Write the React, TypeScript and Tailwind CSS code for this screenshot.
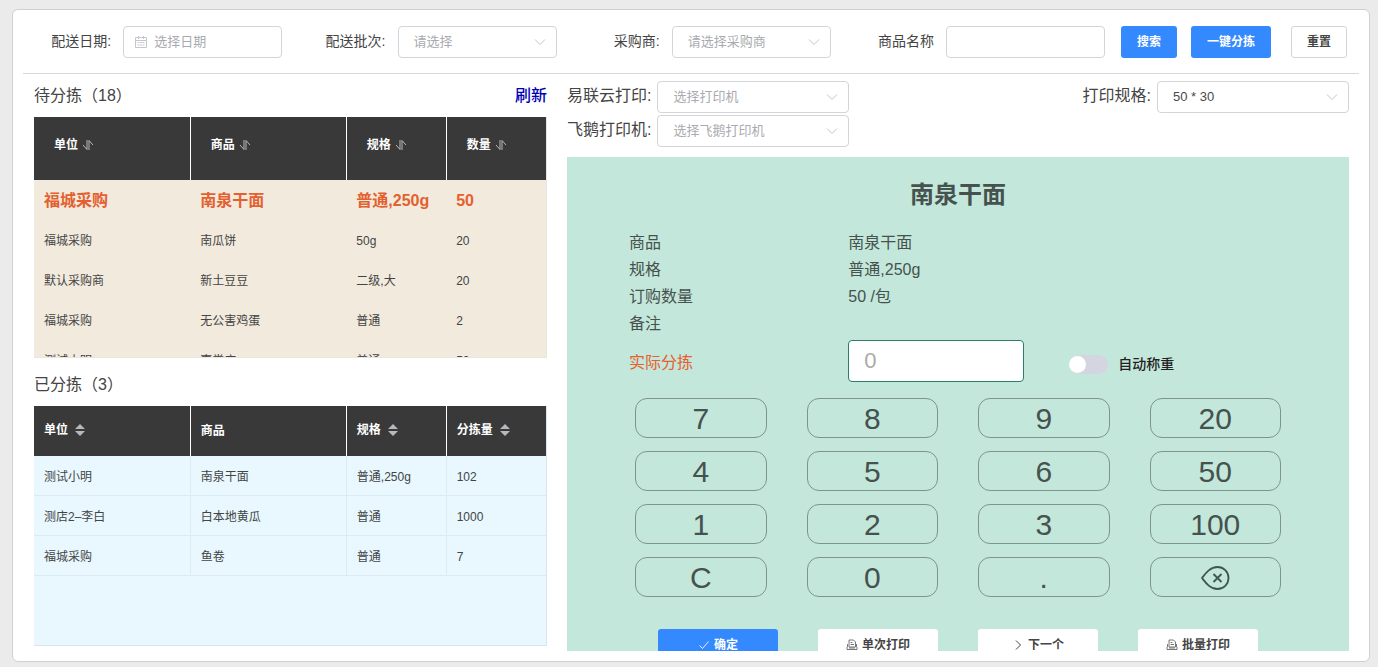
import type { ReactNode } from 'react';

interface SortingRow {
  unit: string;
  product: string;
  spec: string;
  amount: string;
}

const pendingRows: SortingRow[] = [
  { unit: '福城采购', product: '南泉干面', spec: '普通,250g', amount: '50' },
  { unit: '福城采购', product: '南瓜饼', spec: '50g', amount: '20' },
  { unit: '默认采购商', product: '新土豆豆', spec: '二级,大', amount: '20' },
  { unit: '福城采购', product: '无公害鸡蛋', spec: '普通', amount: '2' },
  { unit: '测试小明', product: '嘉尝店', spec: '普通', amount: '50' },
];

const sortedRows: SortingRow[] = [
  { unit: '测试小明', product: '南泉干面', spec: '普通,250g', amount: '102' },
  { unit: '测店2–李白', product: '白本地黄瓜', spec: '普通', amount: '1000' },
  { unit: '福城采购', product: '鱼卷', spec: '普通', amount: '7' },
];

const details = [
  { label: '商品', value: '南泉干面' },
  { label: '规格', value: '普通,250g' },
  { label: '订购数量', value: '50 /包' },
  { label: '备注', value: '' },
];

const keys = ['7', '8', '9', '20', '4', '5', '6', '50', '1', '2', '3', '100', 'C', '0', '.'];

function CalendarIcon() {
  return (
    <svg className="size-3 shrink-0" viewBox="0 0 12 12" fill="none" stroke="#c4c7cd">
      <path d="M.5 1.5h11v10H.5zM.5 4.5h11M3.5 0v3M8.5 0v3M2.5 6.5h2M5 6.5h2M7.5 6.5h2M2.5 9h2M5 9h2M7.5 9h2" />
    </svg>
  );
}

function ChevronIcon() {
  return (
    <svg className="pointer-events-none absolute top-1/2 right-[11px] h-3 w-3 -translate-y-1/2" viewBox="0 0 12 12" fill="none" stroke="#c0c4cc">
      <path d="M1 3.5 6 8.5 11 3.5" />
    </svg>
  );
}

function SwapIcon() {
  return (
    <svg className="size-3" viewBox="0 0 12 12" fill="none" stroke="#d8d8d8" strokeWidth="0.8">
      <path d="M1 6 5 10.5V1M7 11V1.500L11 6" />
    </svg>
  );
}

function CaretSortIcon() {
  return (
    <svg className="h-3 w-2.5" viewBox="0 0 10 12" fill="#b5b8bd">
      <path d="M0 5 5 0l5 5zM0 7l5 5 5-5z" />
    </svg>
  );
}

function PrinterIcon() {
  return (
    <svg className="size-3" viewBox="0 0 12 12" fill="none" stroke="#555" strokeWidth="0.8">
      <path d="M3 8V1h4.500L9.500 3v5zM1.500 5v3M10.500 5v3M1 8v2.500h10V8M4.500 3.500h2M4.500 5.500h3.500M3 9h6" />
    </svg>
  );
}

function CheckIcon() {
  return (
    <svg className="size-3" viewBox="0 0 12 12" fill="none" stroke="white" strokeWidth="0.9">
      <path d="M1.500 6.500 4.500 9.500 10.500 2.500" />
    </svg>
  );
}

function NextIcon() {
  return (
    <svg className="size-3" viewBox="0 0 12 12" fill="none" stroke="#444">
      <path d="M4 1.500 8.500 6 4 10.500" />
    </svg>
  );
}

function BackspaceIcon() {
  return (
    <svg className="h-7 w-8" viewBox="0 0 32 28" fill="none" stroke="#3f554d" strokeWidth="1.800">
      <path d="M3 14C6.500 9.500 11 3 18.500 3a11 11 0 0 1 0 22C11 25 6.500 18.500 3 14Z" strokeLinejoin="round" />
      <path d="M14.500 10l8 8M22.500 10l-8 8" />
    </svg>
  );
}

interface SelectBoxProps {
  id: string;
  text: string;
  filled?: boolean;
  className: string;
}

function SelectBox({ id, text, filled, className }: SelectBoxProps) {
  return (
    <div className={`relative shrink-0 ${className}`}>
      <select
        id={id}
        className={`h-8 w-full appearance-none rounded border border-[#d4d5d8] bg-white pr-7 pl-[15px] text-[13px] ${filled ? 'text-[#4a4a4a]' : 'text-[#a9abb0]'}`}
      >
        <option>{text}</option>
      </select>
      <ChevronIcon />
    </div>
  );
}

function Field({ id, label, children }: { id: string; label: string; children: ReactNode }) {
  return (
    <div className="flex items-center justify-end gap-3">
      <label htmlFor={id} className="pb-0.5 text-sm whitespace-nowrap">{label}</label>
      {children}
    </div>
  );
}

function Columns() {
  return (
    <colgroup>
      <col className="w-[30.5%]" />
      <col className="w-[30.5%]" />
      <col className="w-[19.5%]" />
      <col className="w-[19.5%]" />
    </colgroup>
  );
}

function PendingTable() {
  return (
    <div className="min-h-0 flex-1 overflow-hidden border-r border-b border-[#e8e6e0] bg-[#f1eadd]">
      <table className="w-full table-fixed text-left text-xs">
        <Columns />
        <thead>
          <tr className="h-[63px] bg-[#393939] text-white">
            {['单位', '商品', '规格', '数量'].map((title) => (
              <th key={title} className="border-l border-white pb-2 pl-5 first:border-l-0">
                <button className="flex items-center gap-1 font-bold">
                  {title}
                  <SwapIcon />
                </button>
              </th>
            ))}
          </tr>
        </thead>
        <tbody>
          {pendingRows.map((row, i) => (
            <tr key={i} className={i === 0 ? 'h-10 text-base font-bold text-[#e4602f]' : 'h-10'}>
              <td className="pt-0.5 pl-2.5">{row.unit}</td>
              <td className="pt-0.5 pl-2.5">{row.product}</td>
              <td className="pt-0.5 pl-2.5 whitespace-nowrap">{row.spec}</td>
              <td className="pt-0.5 pl-2.5">{row.amount}</td>
            </tr>
          ))}
        </tbody>
      </table>
    </div>
  );
}

function SortedTable() {
  return (
    <div className="min-h-0 flex-1 overflow-hidden border-r border-b border-[#d8e6eb] bg-[#e8f8fe]">
      <table className="w-full table-fixed text-left text-xs">
        <Columns />
        <thead>
          <tr className="h-[50px] bg-[#393939] text-white">
            {['单位', '商品', '规格', '分拣量'].map((title) => (
              <th key={title} className="border-l border-white pl-2.5 first:border-l-0">
                {title === '商品' ? (
                  title
                ) : (
                  <button className="flex items-center gap-[7px] pb-0.5 font-bold">
                    {title}
                    <CaretSortIcon />
                  </button>
                )}
              </th>
            ))}
          </tr>
        </thead>
        <tbody>
          {sortedRows.map((row, i) => (
            <tr key={i} className="h-10 border-b border-[#dcebf1]">
              <td className="pt-[3px] pl-2.5">{row.unit}</td>
              <td className="border-l border-[#dcebf1] pt-[3px] pl-2.5">{row.product}</td>
              <td className="border-l border-[#dcebf1] pt-[3px] pl-2.5">{row.spec}</td>
              <td className="border-l border-[#dcebf1] pt-[3px] pl-2.5">{row.amount}</td>
            </tr>
          ))}
        </tbody>
      </table>
    </div>
  );
}

function FilterBar() {
  return (
    <form className="mx-2.5 flex items-center border-b border-[#d9d9d9] pt-4 pr-3 pb-[15px] pl-[11px]">
      <div className="grid flex-1 grid-cols-4 gap-[26px]">
        <Field id="date" label="配送日期:">
          <div className="flex h-8 w-[159px] items-center gap-[7px] rounded border border-[#d4d5d8] px-[11px]">
            <CalendarIcon />
            <input id="date" placeholder="选择日期" className="w-full text-[13px] outline-none placeholder:text-[#a9abb0]" />
          </div>
        </Field>
        <Field id="batch" label="配送批次:">
          <SelectBox id="batch" text="请选择" className="w-[159px]" />
        </Field>
        <Field id="buyer" label="采购商:">
          <SelectBox id="buyer" text="请选择采购商" className="w-[159px]" />
        </Field>
        <Field id="product" label="商品名称">
          <input id="product" className="h-8 w-[159px] rounded border border-[#d4d5d8] px-3 text-[13px]" />
        </Field>
      </div>
      <button type="button" className="ml-4 h-8 w-14 rounded-[3px] bg-[#3489fe] text-xs font-bold text-white">搜索</button>
      <button type="button" className="ml-3.5 h-8 w-20 rounded-[3px] bg-[#3489fe] text-xs font-bold text-white">一键分拣</button>
      <button type="reset" className="ml-5 h-8 w-14 rounded-[3px] border border-[#d4d5d8] text-xs font-bold">重置</button>
    </form>
  );
}

function WeighPanel() {
  const action = 'flex h-8 w-[120px] items-center justify-center gap-1 text-xs font-bold';
  return (
    <div className="mt-2.5 min-h-0 flex-1 overflow-hidden bg-[#c4e7db] text-[#46524d]">
      <h2 className="pt-5 text-center text-2xl leading-9 font-bold">南泉干面</h2>
      <dl className="mt-4 px-[62px] text-base leading-[27px]">
        {details.map((item) => (
          <div key={item.label} className="flex">
            <dt className="w-1/3">{item.label}</dt>
            <dd>{item.value}</dd>
          </div>
        ))}
      </dl>
      <div className="mt-[3px] flex items-center px-[62px]">
        <label htmlFor="actual" className="w-1/3 pt-[3px] text-[#e4602f]">实际分拣</label>
        <input
          id="actual"
          placeholder="0"
          className="h-[42px] w-44 rounded border border-[#2b7d6c] bg-white px-[15px] text-[22px] outline-none placeholder:text-[#aaa]"
        />
        <label className="ml-[45px] flex items-center gap-2.5 pt-1.5 text-sm font-medium text-[#222]">
          <input type="checkbox" role="switch" className="peer sr-only" />
          <span className="flex h-[19px] w-[39px] items-center rounded-full bg-[#d5d5e1]">
            <span className="size-[17px] rounded-full bg-white" />
          </span>
          自动称重
        </label>
      </div>
      <div className="mt-4 grid grid-cols-4 gap-x-10 gap-y-[13px] px-[68px] text-3xl">
        {keys.map((key) => (
          <button key={key} className="h-10 rounded-xl border border-[#7d958c] pt-0.5">{key}</button>
        ))}
        <button aria-label="退格" className="flex h-10 items-center justify-center rounded-xl border border-[#7d958c] pt-0.5">
          <BackspaceIcon />
        </button>
      </div>
      <div className="mt-8 flex justify-center gap-10">
        <button className={`${action} rounded-[3px] bg-[#3489fe] text-white`}><CheckIcon />确定</button>
        <button className={`${action} rounded-[3px] bg-white text-[#444]`}><PrinterIcon />单次打印</button>
        <button className={`${action} rounded-[3px] bg-white text-[#444]`}><NextIcon />下一个</button>
        <button className={`${action} rounded-[3px] bg-white text-[#444]`}><PrinterIcon />批量打印</button>
      </div>
    </div>
  );
}

export default function App() {
  return (
    <div className="flex h-screen flex-col bg-[#ebebeb] pt-[9px] pr-2 pb-[5px] pl-3 font-['Liberation_Sans','Noto_Sans_CJK_SC',sans-serif] text-[#444]">
      <main className="flex min-h-0 flex-1 flex-col rounded-md border border-[#d0d0d0] bg-white">
        <FilterBar />
        <div className="grid min-h-0 flex-1 grid-cols-[513fr_782fr] gap-5 pr-5 pl-[21px]">
          <section className="flex min-h-0 flex-col pb-[15px]">
            <div className="flex h-[43px] items-center justify-between">
              <h2>待分拣（18）</h2>
              <a href="#refresh" className="font-medium text-[#0000b8]">刷新</a>
            </div>
            <PendingTable />
            <h2 className="flex h-12 items-center pt-1.5">已分拣（3）</h2>
            <SortedTable />
          </section>

          <section className="flex min-h-0 flex-col pt-[7px] pb-2.5">
            <div className="flex justify-between">
              <div className="grid grid-cols-[auto_auto] items-center gap-x-1.5 gap-y-0.5">
                <label htmlFor="yly" className="pb-0.5">易联云打印:</label>
                <SelectBox id="yly" text="选择打印机" className="w-48" />
                <label htmlFor="feie" className="pb-0.5">飞鹅打印机:</label>
                <SelectBox id="feie" text="选择飞鹅打印机" className="w-48" />
              </div>
              <div className="flex items-center gap-1.5 self-start">
                <label htmlFor="size" className="pb-0.5">打印规格:</label>
                <SelectBox id="size" text="50 * 30" filled className="w-48" />
              </div>
            </div>
            <WeighPanel />
          </section>
        </div>
      </main>
    </div>
  );
}
